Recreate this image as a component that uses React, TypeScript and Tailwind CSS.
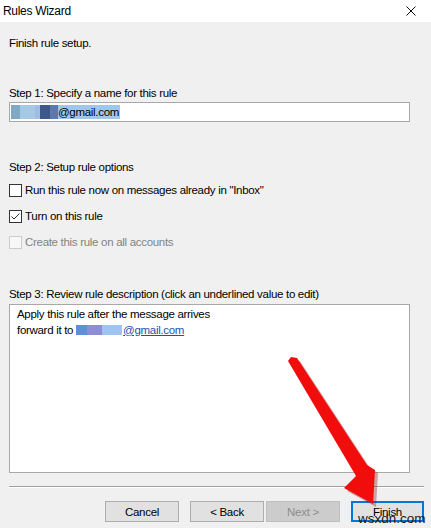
import { ReactNode } from 'react';

const Checkbox = ({ checked, disabled, label }: { checked?: boolean; disabled?: boolean; label: string }) => (
    <div className="flex items-center h-[16px] gap-[3px]">
        <div
            className={
                disabled
                    ? 'w-[13px] h-[13px] border border-[#cccccc] bg-[#f7f7f7]'
                    : 'w-[13px] h-[13px] border border-[#333333] bg-white flex items-center justify-center'
            }
        >
            {checked && (
                <svg width="11" height="11" viewBox="0 0 11 11">
                    <path d="M1.5 5.5 L4 8 L9.5 2.5" fill="none" stroke="#333333" strokeWidth="1" />
                </svg>
            )}
        </div>
        <span className={disabled ? 'text-[#838383]' : 'text-black'}>{label}</span>
    </div>
);

const Button = ({ children, variant }: { children: ReactNode; variant?: 'default' | 'disabled' | 'primary' }) => {
    let cls = 'h-[21px] w-[74px] flex items-center justify-center border border-[#adadad] bg-[#e1e1e1] text-black';
    if (variant === 'disabled') cls = 'h-[21px] w-[74px] flex items-center justify-center border border-[#bfbfbf] bg-[#cccccc] text-[#8d8d8d]';
    if (variant === 'primary') cls = 'h-[21px] w-[73px] flex items-start justify-center border-2 border-[#0078d7] bg-[#e1e1e1] text-black pt-[1px]';
    return <div className={cls}>{children}</div>;
};

const App = () => {
    return (
        <div className="relative w-[431px] h-[528px] overflow-hidden bg-[#f0f0f0] font-['Liberation_Sans',Arial,sans-serif] text-[11.5px] tracking-[-0.3px] leading-[16px] text-black">
            {/* title bar */}
            <div className="h-[22px] bg-white flex items-center justify-between pl-[3px] pr-[15px]">
                <span className="text-[12px]">Rules Wizard</span>
                <svg width="10" height="10" viewBox="0 0 10 10">
                    <path d="M0.5 0.5 L9.5 9.5 M9.5 0.5 L0.5 9.5" stroke="#111111" strokeWidth="1" />
                </svg>
            </div>

            <div className="flex flex-col pl-[9px]">
                <div className="mt-[13px]">Finish rule setup.</div>

                <div className="mt-[34px]">Step 1: Specify a name for this rule</div>
                <div className="mt-[1px] w-[401px] h-[20px] border border-[#a9a9a9] bg-white flex items-center pl-[1px]">
                    <div className="flex h-[14px] items-stretch bg-[#9fc7eb] pr-[1px]">
                        <span className="w-[9px] bg-[#7fa9c4]" />
                        <span className="w-[15px] bg-[#a5c8e5]" />
                        <span className="w-[5px] bg-[#a0bde0]" />
                        <span className="w-[10px] bg-[#3f5a8a]" />
                        <span className="w-[8px] bg-[#5d78ad]" />
                        <span className="flex items-center leading-[14px]">@gmail.com</span>
                    </div>
                </div>

                <div className="mt-[37px]">Step 2: Setup rule options</div>
                <div className="mt-[7px] flex flex-col gap-[10px]">
                    <Checkbox label={'Run this rule now on messages already in "Inbox"'} />
                    <Checkbox checked label="Turn on this rule" />
                    <Checkbox disabled label="Create this rule on all accounts" />
                </div>

                <div className="mt-[36px]">Step 3: Review rule description (click an underlined value to edit)</div>
                <div className="mt-[2px] w-[401px] h-[169px] border border-[#a9a9a9] bg-white pl-[7px] pt-[2px] leading-[15.5px]">
                    <div>Apply this rule after the message arrives</div>
                    <div className="flex items-center">
                        <span>forward it to&nbsp;</span>
                        <span className="w-[11px] h-[10px] bg-[#5e8fd9]" />
                        <span className="w-[15px] h-[10px] bg-[#8c8fd6]" />
                        <span className="w-[20px] h-[10px] bg-[#9ec5ef]" />
                        <span className="text-[#1e4fb4] underline ml-[1px]">@gmail.com</span>
                    </div>
                </div>

                <div className="mt-[13px] w-[415px] h-[1px] bg-[#a0a0a0] border-b border-white box-content" />

                <div className="mt-[13px] w-[415px] flex justify-end">
                    <Button>Cancel</Button>
                    <div className="w-[11px]" />
                    <Button>&lt; Back</Button>
                    <div className="w-[2px]" />
                    <Button variant="disabled">Next &gt;</Button>
                    <div className="w-[11px]" />
                    <Button variant="primary">Finish</Button>
                </div>
            </div>

            {/* red arrow pasted over the screenshot */}
            <svg className="absolute left-0 top-0 pointer-events-none" width="431" height="528" viewBox="0 0 431 528">
                <polygon points="292,358 298,359 368,466 376,471 374,505 345,489 357,477 289,362" fill="#8a1414" opacity="0.35" transform="translate(2,2)" />
                <polygon points="291,357 297,358 367,465 375,470 373,504 344,488 356,476 288,361" fill="#f20d0d" />
            </svg>

            {/* watermark */}
            <div className="absolute left-[358px] top-[512px] text-[13.5px] tracking-normal leading-[14px] text-[#1a1a1a]">wsxdn.com</div>
        </div>
    );
};

export default App;
